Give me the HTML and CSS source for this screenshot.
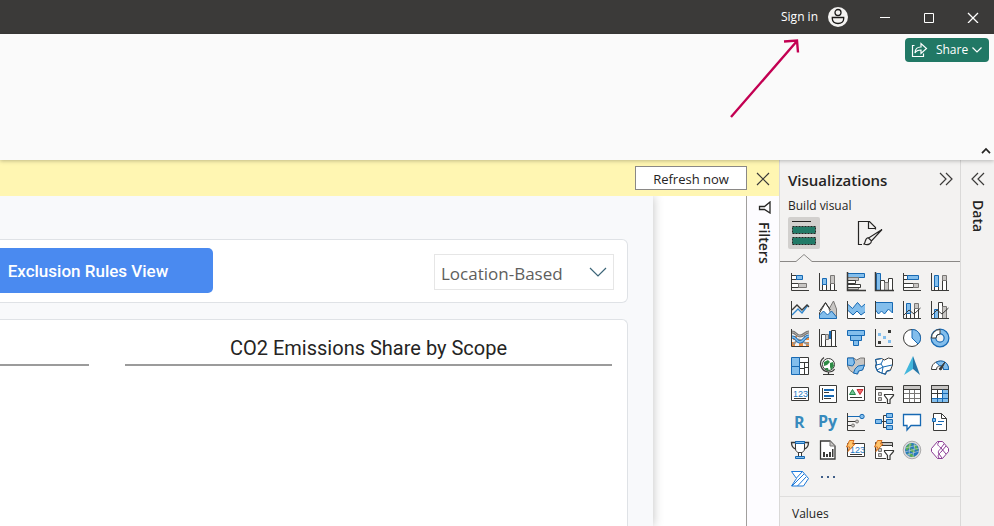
FILE: index.html
```html
<!DOCTYPE html>
<html lang="en">
<head>
<meta charset="utf-8">
<title>Report editor</title>
<link rel="stylesheet" href="styles.css">
</head>
<body>
<header class="titlebar">
  <button class="signin">Sign in
    <svg width="20" height="20" viewBox="0 0 20 20"><circle cx="10" cy="10" r="10" fill="#f3f2f1"/><g fill="none" stroke="#1b1a19" stroke-width="1.300"><circle cx="10" cy="5.500" r="3"/><path d="M4.300 10.500h11.400v1.300c0 2.800-2.400 4.700-5.700 4.700s-5.700-1.900-5.700-4.700z"/></g></svg>
  </button>
  <button class="winbtn" aria-label="Minimize"><svg width="12" height="12" viewBox="0 0 12 12"><path d="M1 6.500h10"/></svg></button>
  <button class="winbtn" aria-label="Maximize"><svg width="12" height="12" viewBox="0 0 12 12"><path d="M1.500 2.500h9v9h-9z"/></svg></button>
  <button class="winbtn" aria-label="Close"><svg width="12" height="12" viewBox="0 0 12 12"><path stroke-width="1.300" d="M1 2l10 10M11 2l-10 10"/></svg></button>
</header>

<section class="ribbon">
  <button class="share">
    <svg width="17" height="16" viewBox="0 0 17 16"><path d="M3.500 3.500H1.500v11h11v-3M4 11c0-4 2.500-6 6-6V1.500l5.500 5-5.500 5V8C7 8 5 9 4 11z"/></svg>
    <span>Share</span>
    <svg width="12" height="12" viewBox="0 0 12 12"><path d="M1.500 3.500L6 8l4.500-4.500"/></svg>
  </button>
  <button class="collapse" aria-label="Collapse ribbon"><svg width="10" height="8" viewBox="0 0 10 8"><path d="M1 6.200L5 2l4 4.200"/></svg></button>
</section>

<div class="workspace">
  <main class="editor">
    <div class="notice">
      <button class="refresh">Refresh now</button>
      <button class="dismiss" aria-label="Dismiss"><svg width="14" height="14" viewBox="0 0 14 14"><path d="M1 1l12 12M13 1L1 13"/></svg></button>
    </div>
    <div class="stage">
      <div class="canvas">
        <div class="page">
          <section class="card toolbar">
            <button class="rules">Exclusion Rules View</button>
            <div class="picker">
              <select aria-label="Accounting method"><option>Location-Based</option></select>
              <svg width="18" height="10" viewBox="0 0 18 10"><path d="M1 1l8 8 8-8"/></svg>
            </div>
          </section>
          <section class="card charts">
            <div class="chart side"></div>
            <div class="chart"><h2>CO2 Emissions Share by Scope</h2></div>
          </section>
        </div>
      </div>
      <aside class="filters">
        <svg width="13" height="13" viewBox="0 0 13 13"><path d="M12 1v11L6.500 8.500H1.500v-3h5z"/></svg>
        <h2>Filters</h2>
      </aside>
    </div>
  </main>

  <aside class="viz">
    <div class="vizhead"><h2>Visualizations</h2>
      <button class="chev" aria-label="Collapse pane"><svg width="14" height="14" viewBox="0 0 14 14"><path d="M1 1l6 6-6 6M7 1l6 6-6 6"/></svg></button></div>
    <h3>Build visual</h3>
    <div class="tabs">
      <button class="tab on" aria-label="Build visual"><svg width="26" height="26" viewBox="0 0 26 26"><path d="M1 1.500h19" stroke="#252423"/><g fill="#217a67" stroke="#252423" stroke-dasharray="2 1"><path d="M1.500 6.500h23v7h-23zM1.500 17.500h23v7h-23z"/></g></svg></button>
      <button class="tab" aria-label="Format visual"><svg width="26" height="26" viewBox="0 0 26 26"><g fill="none" stroke="#252423" stroke-width="1.200"><path d="M5 24.500H1.500v-23h11l6 6v2M11.500 1.500v7h7"/><path d="M25 9.500L14.500 21l-3-3zM11.500 17.500c-4 .5-2.500 4.500-4.500 6.500 4 1.500 7.500 0 7.500-3.500"/></g></svg></button>
    </div>
    <svg class="notch" viewBox="0 0 180 10" width="180" height="10"><path d="M0 8.500h16l8-7 8 7h148"/></svg>
    <div class="gallery">
      <button aria-label="Stacked bar chart"><svg viewBox="0 0 20 20"><path class="w" d="M1.500 3.500h5v4h-5zM1.500 11.500h7v4h-7z"/><path class="b" d="M6.500 3.500h6v4h-6z"/><path class="g" d="M8.500 11.500h8v4h-8z"/><path class="k" d="M1.500 1v17.500H19"/></svg></button>
      <button aria-label="Stacked column chart"><svg viewBox="0 0 20 20"><path class="w" d="M4.500 12.500h4v6h-4zM12.500 11.500h4v7h-4z"/><path class="b" d="M4.500 6.500h4v6h-4z"/><path class="g" d="M12.500 3.500h4v8h-4z"/><path class="k" d="M1.500 1v17.500H19"/></svg></button>
      <button aria-label="Clustered bar chart"><svg viewBox="0 0 20 20"><path class="b" d="M1.500 1.500h17v4h-17z"/><path class="g" d="M1.500 5.500h11v3h-11zM1.500 14.500h11v3h-11z"/><path class="w" d="M1.500 8.500h8v3h-8zM1.500 12.500h13v3h-13z"/><path class="k" stroke-width="1.500" d="M1.500 0v18.500H20"/></svg></button>
      <button aria-label="Clustered column chart"><svg viewBox="0 0 20 20"><path class="b" d="M2.500 1.500h4v17h-4z"/><path class="w" d="M6.500 8.500h4v10h-4zM14.500 6.500h4v12h-4z"/><path class="g" d="M10.500 10.500h4v8h-4z"/><path class="k" stroke-width="1.500" d="M1.500 0v18.500H20"/></svg></button>
      <button aria-label="100% stacked bar chart"><svg viewBox="0 0 20 20"><path class="w" d="M1.500 3.500h4v4h-4zM1.500 11.500h10v4h-10z"/><path class="b" d="M5.500 3.500h11v4h-11z"/><path class="g" d="M11.500 11.500h5v4h-5z"/><path class="k" d="M1.500 1v17.500H19"/></svg></button>
      <button aria-label="100% stacked column chart"><svg viewBox="0 0 20 20"><path class="w" d="M4.500 14.500h4v4h-4zM12.500 8.500h4v10h-4z"/><path class="b" d="M4.500 3.500h4v11h-4z"/><path class="g" d="M12.500 3.500h4v5h-4z"/><path class="k" d="M1.500 1v17.500H19"/></svg></button>

      <button aria-label="Line chart"><svg viewBox="0 0 20 20"><path d="M2 15l6-6 4 4 6-8" fill="none" stroke="#2f86cc" stroke-width="1.400"/><path class="k" stroke-width="1.300" d="M2 10l5-5 5 5 5-5 2 2"/><path class="k" d="M1.500 1v17.500H19"/></svg></button>
      <button aria-label="Area chart"><svg viewBox="0 0 20 20"><path class="w" d="M1.500 13l6-10 6 9v6h-12z"/><path class="g" d="M11 9l4.500-8 3 8v9.500h-4z"/><path class="b" d="M1.500 18.500V15l4-4 4 4 4-4 5 6v1.500z"/><path class="k" d="M1.500 11l6-8.500 5 7.500"/></svg></button>
      <button aria-label="Stacked area chart"><svg viewBox="0 0 20 20"><path d="M2 11l5 5 4-4 4 4 4-3v5H2z" fill="#fff"/><path d="M1.500 4l5 4.500 5-6 4 4.500 3.500-3v8l-4 3-4-4-4 4-5.500-5z" fill="#83beec"/><path class="bl" d="M1.500 4l5 4.500 5-6 4 4.500 3.500-3M1.500 10l5.500 5 4-4 4 4 4-3"/><path class="k" d="M1.500 1v17.500H19"/></svg></button>
      <button aria-label="100% stacked area chart"><svg viewBox="0 0 20 20"><path d="M2 10v8h17v-7z" fill="#fff"/><path d="M1.500 2.500h17V13l-4-4-4 5-3-3-3 3-3-4z" fill="#83beec"/><path class="bl" d="M1.500 2.500h17V13l-4-4-4 5-3-3-3 3-3-4"/><path class="k" d="M1.500 1v17.500H19"/></svg></button>
      <button aria-label="Line and stacked column chart"><svg viewBox="0 0 20 20"><path class="w" d="M4.500 13.500h4v5h-4zM12.500 8.500h4v10h-4z"/><path class="b" d="M4.500 3.500h4v10h-4z"/><path class="g" d="M12.500 3.500h4v5h-4z"/><path class="k" d="M1.500 1v17.500H19M2 15l5-5 5 4 6.500-6"/></svg></button>
      <button aria-label="Line and clustered column chart"><svg viewBox="0 0 20 20"><path class="b" d="M4.500 9.500h4v9h-4z"/><path class="w" d="M8.500 2.500h4v16h-4z"/><path class="g" d="M12.500 6.500h4v12h-4z"/><path class="k" d="M1.500 1v17.500H19M2 15l5-5 5 4 6.500-6"/></svg></button>

      <button aria-label="Ribbon chart"><svg viewBox="0 0 20 20"><path d="M3 8h4v4H3zM14 8h5v4h-5zM2 14h3v4H2zM9 12h4v6H9zM16 14h3v4h-3z" fill="#ed8b3c"/><path d="M2 4c4 0 4 4 8 4s5-4 9-4" fill="none" stroke="#797775" stroke-width="3"/><path d="M2 4c4 0 4 4 8 4s5-4 9-4" fill="none" stroke="#b3b0ad"/><path d="M3 16c4-1 3-6 7-4s5 4 9 4" fill="none" stroke="#979593" stroke-width="2"/><path d="M2 9c5 0 4 5 8 5s4-6 9-6" fill="none" stroke="#1769b3" stroke-width="3"/><path d="M2 9c5 0 4 5 8 5s4-6 9-6" fill="none" stroke="#83beec" stroke-width="1.400"/><path class="k" d="M1.500 1v17.500H19"/></svg></button>
      <button aria-label="Waterfall chart"><svg viewBox="0 0 20 20"><path class="w" d="M3.500 6.500h4v12h-4zM13.500 2.500h4v16h-4z"/><path class="g" d="M7.500 6.500h3v5h-3z"/><path d="M11 3h2v8h-2z" fill="#1769b3"/><path class="k" d="M1.500 1v17.500H19"/></svg></button>
      <button aria-label="Funnel chart"><svg viewBox="0 0 20 20"><path class="b" d="M1.500 2.500h17v5h-17zM4.500 7.500h11v5h-11zM7.500 12.500h5v5h-5z"/></svg></button>
      <button aria-label="Scatter chart"><svg viewBox="0 0 20 20"><path d="M4 5h3v3H4zM9 8h3v3H9zM14 12h3v3h-3z" fill="#83beec"/><path d="M14 2h3v3h-3zM4 13h3v3H4z" fill="#3a3a38"/><path class="k" d="M1.500 1v17.500H19"/></svg></button>
      <button aria-label="Pie chart"><svg viewBox="0 0 20 20"><circle class="w" cx="10" cy="10" r="8.500"/><path class="b" d="M10 1.500V10l6 6A8.500 8.500 0 0 0 10 1.500z"/></svg></button>
      <button aria-label="Donut chart"><svg viewBox="0 0 20 20"><circle cx="10" cy="10" r="6.500" fill="none" stroke="#1769b3" stroke-width="6"/><circle cx="10" cy="10" r="6.500" fill="none" stroke="#83beec" stroke-width="3.600"/><path class="w" d="M1.500 10A8.500 8.500 0 0 1 10 1.500v4.500A4 4 0 0 0 6 10z"/></svg></button>

      <button aria-label="Treemap"><svg viewBox="0 0 20 20"><path class="w" d="M9.500 1.500h9v17h-9z"/><path class="k" d="M9.500 6.500h9M14.500 6.500v12M9.500 12.500h5M14.500 11.500h4"/><path class="b" d="M1.500 1.500h8v9h-8zM1.500 10.500h8v8h-8z"/></svg></button>
      <button aria-label="Map"><svg viewBox="0 0 20 20"><circle class="w" cx="10.500" cy="8.500" r="6"/><path d="M6 6l4-2 2 2-3 3-3 1zM12 7l3-1 1 4-3 4-1-3zM7 12l3 0 1 3-3-1z" fill="#2e8b45"/><path class="k" stroke-width="1.200" d="M6 1.500C-.500 6 3 15.500 10.500 16c3 0 5-1 6-3M10.500 16v2.500M5 18.500h11"/></svg></button>
      <button aria-label="Filled map"><svg viewBox="0 0 20 20"><path class="g" d="M1.500 2l6 0 3 2 4-2 4 0v7l-2 5-4 1-1 3-4-1-4-3-2-4z"/><path class="b" d="M1.500 2h6l1 5-2 3-5-1zM9 13l3-3 6.500-1-2 5-4 1-1 3-4-1z"/></svg></button>
      <button aria-label="Shape map"><svg viewBox="0 0 20 20"><path class="w" d="M1.500 3.500l6-1 3 1.500 4-2 4 1v6l-2 5-4 1-1 3-4-1-4-2-2-5 1-3z"/><path class="bl" d="M2 9l5-1 2-4M7 8l2 3 9-2M9 11l-1 6M9 11l-6 3"/><path class="bl" d="M1.500 3.500l6-1M1.500 3.500L2.500 9l-1 2 2 4.500 8 3 1-3 4-1"/></svg></button>
      <button aria-label="Azure map"><svg viewBox="0 0 20 20"><path d="M11 0L2 19l9-6z" fill="#41b6dc"/><path d="M11 0l7 19-7-6z" fill="#2476a8"/></svg></button>
      <button aria-label="Gauge"><svg viewBox="0 0 20 20"><path class="w" d="M1.500 13.500c0-11 17-11 17 0h-5c0-5-7-5-7 0z"/><path class="b" d="M6 6.500c6-4 13 0 12.500 7h-5c0-3-2-4-4-4z"/><path d="M9 13l6-7-4 8z" fill="#3a3a38" stroke="#3a3a38"/></svg></button>

      <button aria-label="Card"><svg viewBox="0 0 20 20"><path class="w" d="M1.500 3.500h17v13h-17z"/><text class="num" x="3" y="13">123</text><path class="k" d="M4 14.500h12"/></svg></button>
      <button aria-label="Multi-row card"><svg viewBox="0 0 20 20"><path class="w" d="M1.500 1.500h17v17h-17z"/><path class="k" d="M4.500 4v12M6 8.500h5M6 14.500h7"/><path class="bl" stroke-width="2" d="M6 6h10M6 12h10"/></svg></button>
      <button aria-label="KPI"><svg viewBox="0 0 20 20"><path class="w" d="M1.500 2.500h17v14h-17z"/><path d="M3.500 10.500l3-5 3 5z" fill="#72c596" stroke="#258449"/><path d="M11 5.500h6l-3 5z" fill="#f16b6b" stroke="#c72d34"/><path class="k" d="M4 13.500h12"/></svg></button>
      <button aria-label="Slicer"><svg viewBox="0 0 20 20"><path class="w" d="M1.500 2.500h17v16h-17z"/><path d="M2 3h16v2H2z" fill="#c8c6c4"/><path class="k" d="M1 5.500h18"/><path class="g" d="M4.500 8.500h3v3h-3zM4.500 13.500h3v3h-3z"/><path d="M12 16h8v4h-8zM18 7h2v9h-2z" fill="#f3f2f1"/><path class="funnel" d="M10.500 10.500h9v1l-3.500 4v4h-2.500v-4l-3-4z"/></svg></button>
      <button aria-label="Table"><svg viewBox="0 0 20 20"><path class="w" d="M1.500 2.500h17v16h-17z"/><path d="M2 2h16v3H2z" fill="#c8c6c4"/><path class="k" d="M1.500 5.500h17v13h-17zM1.500 5V1.500h17V5"/><path d="M2 9.500h16M2 14.500h16M7.500 6v12M12.500 6v12" stroke="#797775"/></svg></button>
      <button aria-label="Matrix"><svg viewBox="0 0 20 20"><path class="w" d="M1.500 1.500h17v17h-17z"/><path d="M2 2h16v3H2z" fill="#c8c6c4"/><path d="M13 6h5v12H2v-4h11z" fill="#83beec"/><path class="k" d="M1 5.500h18M1.500 9.500h11M1.500 14.500h11M7.500 5v9"/><path class="bl" d="M12.500 5.500v13M12.500 9.500h6M2 14.500h16.500M7.500 14.500v4"/><path class="k" d="M1.500 1.500h17v17h-17z"/></svg></button>

      <button aria-label="R script visual"><svg viewBox="0 0 20 20"><text class="script" x="4" y="16">R</text></svg></button>
      <button aria-label="Python visual"><svg viewBox="0 0 20 20"><text class="script" x="0" y="15">Py</text></svg></button>
      <button aria-label="Key influencers"><svg viewBox="0 0 20 20"><path class="bl" d="M2 4.500h12"/><path class="k" d="M1.500 1v17.500H19M2 9.500h8M2 13.500h4"/><circle class="b" cx="16" cy="4.500" r="2.200"/><circle class="g" cx="11" cy="9.500" r="1.500"/><circle class="g" cx="7" cy="13.500" r="1.500"/></svg></button>
      <button aria-label="Decomposition tree"><svg viewBox="0 0 20 20"><path class="k" d="M7 9.500h5M9.500 3.500V16M9.500 3.500h3M9.500 15.500h3"/><path class="b" d="M1.500 7.500h6v4h-6zM12.500 1.500h6v4h-6zM12.500 7.500h6v4h-6zM12.500 13.500h6v4h-6z"/></svg></button>
      <button aria-label="Q&amp;A"><svg viewBox="0 0 20 20"><path d="M1.500 2.500h17v11H9l-4 4.500v-4.500H1.500z" fill="#fff" stroke="#1769b3" stroke-width="1.300"/></svg></button>
      <button aria-label="Smart narrative"><svg viewBox="0 0 20 20"><path class="w" d="M3.500 1.500h8l5 5v12h-13z"/><path class="k" d="M11.500 1.500v5h5"/><path class="b" d="M2.500 6.500h3v3h-3z"/><path class="bl" d="M8 9.500h6M6 12.500h6"/></svg></button>

      <button aria-label="Goals"><svg viewBox="0 0 20 20"><path class="w" d="M5.500 1.500h9V9c0 2-2 3.500-3 3.500h-3c-1 0-3-1.500-3-3.500zM8.500 12.500h3v4h-3z"/><path class="k" stroke-width="1.300" d="M5 2.500H1.500C1.500 7 4 8.500 6 9M15 2.500h3.500C18.500 7 16 8.500 14 9"/><path class="b" d="M5.500 1.500h9v2h-9zM5.500 16.500h9v2h-9z"/></svg></button>
      <button aria-label="Paginated report"><svg viewBox="0 0 20 20"><path class="w" stroke-width="1.300" d="M2.500 1h9.500l5 5v13H2.500z"/><path class="g" d="M12 1v5h5"/><path d="M5 12h2v5H5zM8 14h2v3H8zM11 12h2v5h-2zM14 9h1.500v8H14z" fill="#3a3a38"/></svg></button>
      <button aria-label="New card"><svg viewBox="0 0 20 20"><path class="w" d="M1.500 3.500h17v13h-17z"/><text class="num" x="4" y="13">123</text><path class="k" d="M4 14.500h12"/><path class="bolt" d="M3.500.500h4.500L6.500 4H9L2 11.500 3.500 7H.5z"/></svg></button>
      <button aria-label="New slicer"><svg viewBox="0 0 20 20"><path class="w" d="M1.500 2.500h17v16h-17z"/><path d="M2 3h16v2H2z" fill="#c8c6c4"/><path class="k" d="M1 5.500h18"/><path class="g" d="M4.500 8.500h3v3h-3zM4.500 13.500h3v3h-3z"/><path d="M12 16h8v4h-8zM18 7h2v9h-2z" fill="#f3f2f1"/><path class="funnel" d="M10.500 10.500h9v1l-3.500 4v4h-2.500v-4l-3-4z"/><path class="bolt" d="M3.500.500h4.500L6.500 4H9L2 11.500 3.500 7H.5z"/></svg></button>
      <button aria-label="ArcGIS map"><svg viewBox="0 0 20 20"><circle cx="10" cy="10" r="8.800" fill="#dcdcdc" stroke="#aaa"/><circle cx="10" cy="10" r="7" fill="#2678bd"/><path d="M4 7l4-4 2 1-2 4-4 3zM11 4l4 2 1 5-3-2zM5 13l5 1 3 3-4 0zM9 8l4 3-1 2-4-2z" fill="#58ae52"/><path d="M3 8l13-3M3 12l14-4M5 15l12-4M8 3l-1 13M13 3l-2 14" fill="none" stroke="#c8d4d8" stroke-width=".6"/></svg></button>
      <button aria-label="Power Apps"><svg viewBox="0 0 20 20"><path d="M7.500 1.500h5l6 7v3l-6 7h-5l-6-7v-3z" fill="#fff"/><path d="M7.500 1.500h5l6 7v3l-6 7h-5l-6-7v-3zM9 2c-3 3 0 4 2 6l5 6M14 4l-3 4c-1 2-4 3-2 6l3 4M16 6l-5 6c-2 2-4 3-2 6" fill="none" stroke="#8a3c94"/></svg></button>

      <button aria-label="Power Automate"><svg viewBox="0 0 20 20"><path d="M1.500 3.500h11l6 7-5 7.500H1.500l5-7.500z" fill="#fff"/><path d="M1.500 3.500h11l6 7-5 7.500H1.500l5-7.500zM2 18L14 6M7.500 18l8.500-9M6.500 10l6-6.500" fill="none" stroke="#1c79da"/></svg></button>
      <button aria-label="Get more visuals"><svg viewBox="0 0 20 20"><path d="M3 8h2v2H3zM9 8h2v2H9zM15 8h2v2h-2z" fill="#3f5e88"/></svg></button>
    </div>
    <div class="values">Values</div>
  </aside>

  <aside class="data">
    <button class="chev" aria-label="Expand data pane"><svg width="14" height="14" viewBox="0 0 14 14"><path d="M7 1L1 7l6 6M13 1L7 7l6 6"/></svg></button>
    <h2>Data</h2>
  </aside>
</div>

<svg class="pointer" width="72" height="82" viewBox="0 0 72 82"><path d="M2 80L68 4M55 4.500L68 3.500l1 12"/></svg>
</body>
</html>
```

FILE: styles.css
```css
* { box-sizing: border-box; }
body {
  margin: 0;
  height: 100vh;
  display: flex;
  flex-direction: column;
  overflow: hidden;
  font: 12px/16px "Open Sans", "Noto Sans", sans-serif;
  color: #252423;
  background: #f3f2f1;
}
button {
  font: inherit;
  color: inherit;
  padding: 0;
  border: 0;
  background: none;
  display: flex;
  align-items: center;
  justify-content: center;
}
h2, h3 { margin: 0; }
svg { flex: none; }

.titlebar {
  height: 34px;
  flex: none;
  display: flex;
  align-items: center;
  justify-content: flex-end;
  background: #3b3a39;
  color: #fff;
}
.signin { gap: 10px; margin-right: 15px; }
.winbtn { width: 44px; height: 34px; }
.winbtn:last-child { width: 43px; }
.winbtn path { fill: none; stroke: #fff; }

.ribbon {
  position: relative;
  z-index: 1;
  height: 126px;
  flex: none;
  display: flex;
  flex-direction: column;
  justify-content: space-between;
  align-items: flex-end;
  padding: 4px 5px 3px;
  background: #fafafa;
  box-shadow: 0 1px 4px rgba(0, 0, 0, .25);
}
.share {
  width: 84px;
  height: 24px;
  border-radius: 4px;
  background: #217865;
  color: #fff;
}
.share span { margin: 0 3px 0 8px; }
.share path { fill: none; stroke: #fff; stroke-width: 1.2; }
.collapse { width: 10px; height: 12px; margin-right: -2px; }
.collapse path { fill: none; stroke: #252423; stroke-width: 1.7; }

.workspace { flex: 1; min-height: 0; display: flex; }
.editor { flex: 1; min-width: 0; display: flex; flex-direction: column; }
.notice {
  height: 36px;
  flex: none;
  display: flex;
  align-items: center;
  justify-content: flex-end;
  gap: 9px;
  padding-right: 9px;
  background: #fff6b2;
}
.refresh {
  width: 112px;
  height: 24px;
  padding-top: 2px;
  border: 1px solid #8a8886;
  background: #fff;
  font-size: 13px;
}
.dismiss { padding-top: 2px; }
.dismiss path, .chev path { fill: none; stroke: #3b3a39; stroke-width: 1.2; }
.stage { flex: 1; min-height: 0; display: flex; }
.canvas {
  flex: 1;
  display: flex;
  padding-right: 93px;
  overflow: hidden;
  background: #fff;
}
.page {
  flex: 1;
  display: flex;
  flex-direction: column;
  gap: 16px;
  padding: 43px 25px 0 0;
  background: #f8f9fb;
  box-shadow: 0 0 10px rgba(0, 0, 0, .25);
}
.card { border: 1px solid #dfe2e6; border-left: 0; background: #fff; }
.toolbar {
  height: 64px;
  flex: none;
  display: flex;
  align-items: flex-start;
  justify-content: space-between;
  padding: 8px 13px 0 0;
  border-radius: 0 6px 6px 0;
}
.rules {
  width: 213px;
  height: 45px;
  padding-right: 37px;
  border-radius: 0 5px 5px 0;
  background: #4a8af0;
  color: #fff;
  font: 500 17px/20px Roboto, sans-serif;
}
.picker { position: relative; width: 180px; height: 36px; margin-top: 6px; }
.picker select {
  appearance: none;
  width: 100%;
  height: 100%;
  padding: 4px 6px 0;
  border: 1px solid #e6e6e6;
  background: #fff;
  color: #605e5c;
  font: 500 17px/24px "Open Sans", sans-serif;
}
.picker svg { position: absolute; right: 7px; top: 13px; pointer-events: none; }
.picker path { fill: none; stroke: #3c6578; stroke-width: 1.2; }
.charts {
  flex: 1;
  display: flex;
  gap: 36px;
  padding: 0 15px 0 0;
  border-bottom: 0;
  border-radius: 0 6px 0 0;
}
.chart {
  flex: 1;
  height: 46px;
  padding-top: 16px;
  border-bottom: 2px solid #9b9b9b;
}
.side { flex: 0 0 89px; }
.chart h2 { text-align: center; font: 20px/24px Roboto, sans-serif; }

.filters {
  width: 33px;
  flex: none;
  display: flex;
  flex-direction: column;
  align-items: center;
  gap: 8px;
  padding: 5px 0 0 2px;
  border-left: 1px solid #a19f9d;
  background: #fdfcff;
}
.filters path { fill: none; stroke: #252423; stroke-width: 1.3; }
.filters h2, .data h2 { writing-mode: vertical-rl; font: 600 14px/20px "Open Sans", sans-serif; }

.viz {
  width: 181px;
  flex: none;
  display: flex;
  flex-direction: column;
  border-left: 1px solid #dad9d8;
}
.viz > * { flex: none; }
.vizhead {
  display: flex;
  align-items: center;
  justify-content: space-between;
  height: 38px;
  padding: 0 7px 0 8px;
}
.vizhead h2 { padding-top: 2px; font: 600 15px/20px "Open Sans", sans-serif; }
.viz h3 { padding: 0 8px; font-size: 12px; font-weight: 400; line-height: 16px; }
.tabs { display: flex; gap: 34px; padding: 3px 8px 0; }
.tab { width: 32px; height: 32px; border-radius: 2px; }
.tab.on { background: #d2d0ce; }
.notch { margin-top: 4px; }
.notch path { fill: none; stroke: #8a8886; }
.gallery {
  display: grid;
  grid-template-columns: repeat(6, 20px);
  gap: 8px;
  padding: 9px 10px 8px;
}
.gallery svg { width: 20px; height: 20px; overflow: visible; }
.w { fill: #fff; stroke: #3a3a38; }
.b { fill: #83beec; stroke: #1769b3; }
.g { fill: #c8c6c4; stroke: #797775; }
.k { fill: none; stroke: #3a3a38; }
.bl { fill: none; stroke: #1769b3; }
.funnel { fill: #fff; stroke: #3a3a38; stroke-width: 1.2; }
.bolt { fill: #ffc46b; stroke: #d6701f; }
.num { font: 9px "Liberation Sans", sans-serif; fill: #1e78c2; }
.script { font: 700 16px "Open Sans", sans-serif; fill: #378abd; }
.values { padding: 9px 12px 4px; border-top: 1px solid #dfdedd; }

.data {
  width: 34px;
  flex: none;
  display: flex;
  flex-direction: column;
  align-items: center;
  border-left: 1px solid #dad9d8;
}
.data .chev { height: 38px; }
.data h2 { margin-top: 2px; }

.pointer { position: absolute; right: 193px; top: 37px; z-index: 2; }
.pointer path { fill: none; stroke: #c30052; stroke-width: 2.4; }
```
